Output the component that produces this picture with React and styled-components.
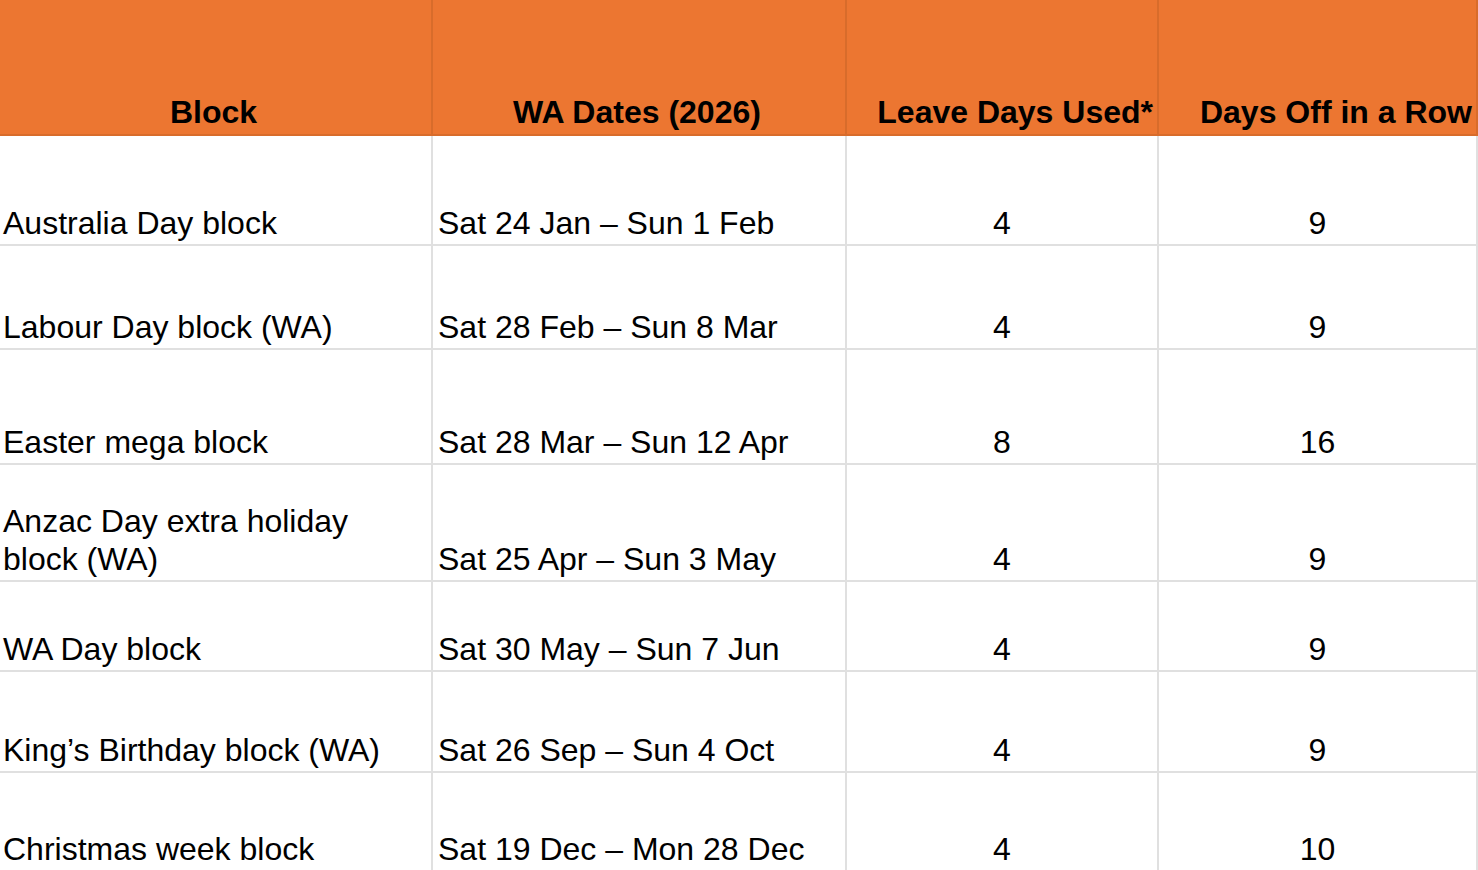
import React from "react";
import styled, { createGlobalStyle } from "styled-components";

const Global = createGlobalStyle`
  html, body { margin: 0; padding: 0; background: #ffffff; overflow: hidden; }
  body { font-family: "Liberation Sans", Arial, sans-serif; }
`;

const Sheet = styled.div`
  display: grid;
  grid-template-columns: 433px 414px 312px 319px;
  grid-template-rows: 136px 110px 104px 115px 117px 90px 101px 99px;
  width: 1478px;
  height: 870px;
  overflow: hidden;
  font-family: "Liberation Sans", Arial, sans-serif;
  font-size: 32px;
  line-height: 38px;
  color: #000;
`;

const HeadCell = styled.div`
  box-sizing: border-box;
  background: #ec7631;
  border-right: 2px solid #d86c2b;
  border-bottom: 2px solid #d86c2b;
  display: flex;
  align-items: flex-end;
  justify-content: ${(p) => (p.$align === "right" ? "flex-end" : "center")};
  padding: 0 4px 3px 0;
  font-weight: 700;
  white-space: nowrap;
`;

const Cell = styled.div`
  box-sizing: border-box;
  border-right: 2px solid #e0e0e0;
  border-bottom: 2px solid #e0e0e0;
  display: flex;
  align-items: flex-end;
  justify-content: ${(p) => (p.$center ? "center" : "flex-start")};
  padding: 0 ${(p) => (p.$center ? "0" : "4px")} 2px ${(p) => p.$pl || 0}px;
  white-space: pre-line;
`;

const headers = [
  { t: "Block", a: "center" },
  { t: "WA Dates (2026)", a: "center" },
  { t: "Leave Days Used*", a: "right" },
  { t: "Days Off in a Row", a: "right" },
];

const rows = [
  ["Australia Day block", "Sat 24 Jan – Sun 1 Feb", "4", "9"],
  ["Labour Day block (WA)", "Sat 28 Feb – Sun 8 Mar", "4", "9"],
  ["Easter mega block", "Sat 28 Mar – Sun 12 Apr", "8", "16"],
  ["Anzac Day extra holiday\nblock (WA)", "Sat 25 Apr – Sun 3 May", "4", "9"],
  ["WA Day block", "Sat 30 May – Sun 7 Jun", "4", "9"],
  ["King’s Birthday block (WA)", "Sat 26 Sep – Sun 4 Oct", "4", "9"],
  ["Christmas week block", "Sat 19 Dec – Mon 28 Dec", "4", "10"],
];

export default function App() {
  return (
    <>
      <Global />
      <Sheet>
        {headers.map((h) => (
          <HeadCell key={h.t} $align={h.a}>
            {h.t}
          </HeadCell>
        ))}
        {rows.map((r) => (
          <React.Fragment key={r[0]}>
            <Cell $pl={3}>{r[0]}</Cell>
            <Cell $pl={5}>{r[1]}</Cell>
            <Cell $center>{r[2]}</Cell>
            <Cell $center>{r[3]}</Cell>
          </React.Fragment>
        ))}
      </Sheet>
    </>
  );
}
